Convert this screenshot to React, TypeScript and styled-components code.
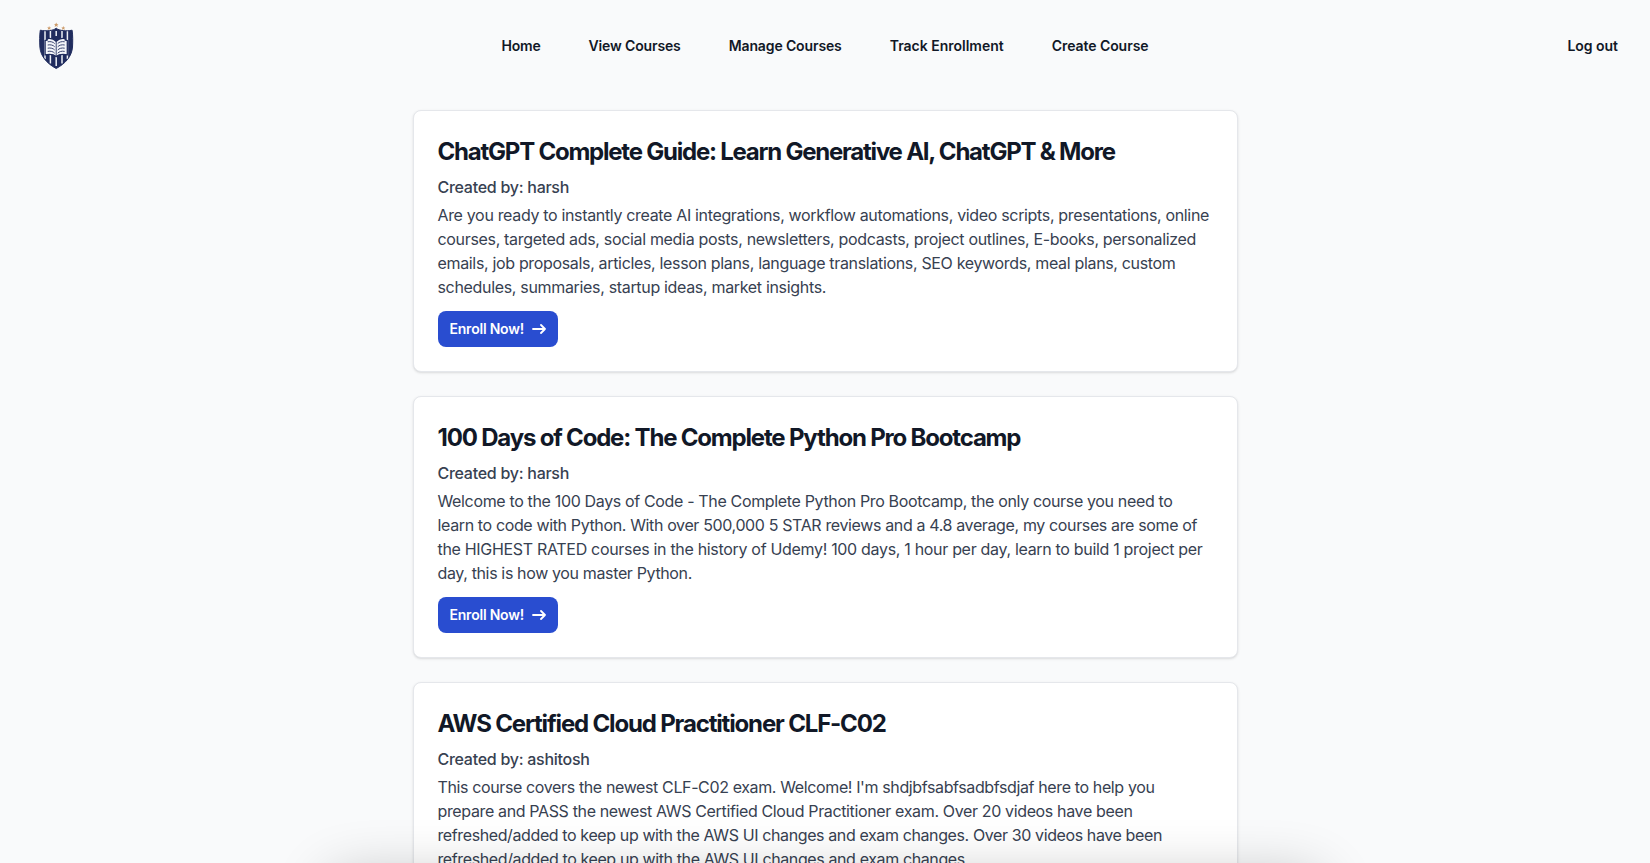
import React from 'react';
import styled, { createGlobalStyle } from 'styled-components';

const GlobalStyle = createGlobalStyle`
  *, *::before, *::after { box-sizing: border-box; }
  html, body { margin: 0; height: 100%; overflow: hidden; }
  body {
    background: #f9fafb;
    color: #111827;
    font-family: Inter, 'Liberation Sans', sans-serif;
    font-size: 16px;
    line-height: 24px;
  }
`;

const Header = styled.header`
  display: flex;
  align-items: center;
  height: 92px;
  padding: 0 32px;
`;

const Side = styled.div<{ $end?: boolean }>`
  display: flex;
  flex: 1;
  justify-content: ${(p) => (p.$end ? 'flex-end' : 'flex-start')};
`;

const Nav = styled.nav`
  display: flex;
  gap: 48px;
`;

const NavLink = styled.a<{ $tracking: number }>`
  color: #111827;
  font-size: 14px;
  font-weight: 600;
  letter-spacing: ${(p) => p.$tracking}px;
  text-decoration: none;
  white-space: nowrap;
`;

const LogoSvg = styled.svg`
  display: block;
  width: 48px;
  height: 48px;
`;

const CourseList = styled.main`
  display: flex;
  flex-direction: column;
  gap: 24px;
  width: 50%;
  margin: 18px auto 0;
`;

const Card = styled.article`
  height: 262px;
  padding: 24px;
  border: 1px solid #e5e7eb;
  border-radius: 8px;
  background: #fff;
  box-shadow: 0 1px 3px rgba(0, 0, 0, 0.1), 0 1px 2px -1px rgba(0, 0, 0, 0.1);
`;

const Title = styled.h2<{ $tracking: number }>`
  margin: 0 0 6px;
  font-size: 24px;
  font-weight: 700;
  line-height: 34px;
  letter-spacing: ${(p) => p.$tracking}px;
  white-space: nowrap;
`;

const Author = styled.p`
  margin: 0 0 4px;
  color: #374151;
  font-weight: 500;
  letter-spacing: -0.27px;
`;

const Description = styled.p`
  margin: 0 0 12px;
  color: #374151;
`;

const Line = styled.span<{ $tracking: number }>`
  display: block;
  letter-spacing: ${(p) => p.$tracking}px;
  white-space: nowrap;
`;

const EnrollButton = styled.button`
  display: inline-flex;
  align-items: center;
  justify-content: space-between;
  width: 120px;
  height: 36px;
  padding: 0 12px;
  border: 0;
  border-radius: 8px;
  background: #294dd0;
  color: #fff;
  font: 600 14px/20px Inter, 'Liberation Sans', sans-serif;
  letter-spacing: -0.22px;
  white-space: nowrap;
`;

const DockShadow = styled.div`
  position: fixed;
  top: 876px;
  left: 328px;
  right: 328px;
  height: 80px;
  border-radius: 20px;
  box-shadow: 0 0 56px rgba(0, 0, 0, 0.24);
  pointer-events: none;
`;

const SHIELD =
  'M23.5 6.2C20.5 8.8 13.5 9.4 7.6 8.2C6.8 13 6.9 20 7.2 25C7.8 34 14 41.5 23.5 46.5C33 41.5 39.2 34 39.8 25C40.1 20 40.2 13 39.4 8.2C33.5 9.4 26.5 8.8 23.5 6.2Z';
const STAR = 'M0-2.2L.65-.8L2.1-.7L1-.0L1.4 1.8L0 .9L-1.4 1.8L-1 0L-2.1-.7L-.65-.8Z';

function Logo() {
  return (
    <LogoSvg viewBox="-0.7 0 48 48" aria-label="Shield with an open book">
      <defs>
        <clipPath id="shield">
          <path d={SHIELD} />
        </clipPath>
      </defs>
      <path d={SHIELD} fill="#202c5e" />
      <g clipPath="url(#shield)" stroke="#edf0f6" strokeWidth="1.5">
        <path d="M12.3 5V37M17.7 5V41.5M23.5 9V14M23.5 35V44M29.3 5V41.5M34.7 5V37" />
      </g>
      <path
        d="M14.5 16.6C18 16 21.4 17 23.5 19.2C25.6 17 29 16 32.5 16.6V18L34.6 18.6V32.8C30 31.8 26 32.4 23.5 34.6C21 32.4 17 31.8 12.4 32.8V18.6L14.5 18Z"
        fill="#f3f5f9"
        stroke="#202c5e"
        strokeWidth="1.3"
      />
      <path
        d="M15 19.8C18 19.2 20.5 20 22 21.6M15 23C18 22.4 20.5 23.2 22 24.8M15 26.2C18 25.6 20.5 26.4 22 28M15 29.4C18 28.8 20.5 29.6 22 31.2M32 19.8C29 19.2 26.5 20 25 21.6M32 23C29 22.4 26.5 23.2 25 24.8M32 26.2C29 25.6 26.5 26.4 25 28M32 29.4C29 28.8 26.5 29.6 25 31.2M23.5 19V34"
        fill="none"
        stroke="#3b4672"
        strokeWidth="1"
      />
      <path d={SHIELD} fill="none" stroke="#202c5e" strokeWidth="1" />
      <g fill="#cd9c6b">
        <path d={STAR} transform="translate(23.5 2.9) scale(1.1)" />
        <path d={STAR} transform="translate(16.4 6.2)" />
        <path d={STAR} transform="translate(30.6 6.2)" />
      </g>
    </LogoSvg>
  );
}

function Arrow() {
  return (
    <svg width="14" height="14" viewBox="0 0 14 10" fill="none" aria-hidden="true">
      <path
        d="M1 5h12m0 0L9 1m4 4L9 9"
        stroke="currentColor"
        strokeWidth="1.8"
        strokeLinecap="round"
        strokeLinejoin="round"
      />
    </svg>
  );
}

type Tracked = [text: string, tracking: number];

const links: Tracked[] = [
  ['Home', -0.215],
  ['View Courses', -0.14],
  ['Manage Courses', -0.125],
  ['Track Enrollment', -0.007],
  ['Create Course', -0.06],
];

const courses: { title: Tracked; author: string; lines: Tracked[] }[] = [
  {
    title: ['ChatGPT Complete Guide: Learn Generative AI, ChatGPT & More', -1.225],
    author: 'harsh',
    lines: [
      ['Are you ready to instantly create AI integrations, workflow automations, video scripts, presentations, online', -0.336],
      ['courses, targeted ads, social media posts, newsletters, podcasts, project outlines, E-books, personalized', -0.326],
      ['emails, job proposals, articles, lesson plans, language translations, SEO keywords, meal plans, custom', -0.334],
      ['schedules, summaries, startup ideas, market insights.', -0.327],
    ],
  },
  {
    title: ['100 Days of Code: The Complete Python Pro Bootcamp', -1.185],
    author: 'harsh',
    lines: [
      ['Welcome to the 100 Days of Code - The Complete Python Pro Bootcamp, the only course you need to', -0.347],
      ['learn to code with Python. With over 500,000 5 STAR reviews and a 4.8 average, my courses are some of', -0.367],
      ['the HIGHEST RATED courses in the history of Udemy! 100 days, 1 hour per day, learn to build 1 project per', -0.314],
      ['day, this is how you master Python.', -0.36],
    ],
  },
  {
    title: ['AWS Certified Cloud Practitioner CLF-C02', -1.165],
    author: 'ashitosh',
    lines: [
      ["This course covers the newest CLF-C02 exam. Welcome! I'm shdjbfsabfsadbfsdjaf here to help you", -0.375],
      ['prepare and PASS the newest AWS Certified Cloud Practitioner exam. Over 20 videos have been', -0.358],
      ['refreshed/added to keep up with the AWS UI changes and exam changes. Over 30 videos have been', -0.389],
      ['refreshed/added to keep up with the AWS UI changes and exam changes.', -0.385],
    ],
  },
];

export default function App() {
  return (
    <>
      <GlobalStyle />
      <Header>
        <Side>
          <Logo />
        </Side>
        <Nav>
          {links.map(([text, tracking]) => (
            <NavLink key={text} $tracking={tracking}>
              {text}
            </NavLink>
          ))}
        </Nav>
        <Side $end>
          <NavLink $tracking={-0.03}>Log out</NavLink>
        </Side>
      </Header>
      <CourseList>
        {courses.map(({ title, author, lines }) => (
          <Card key={title[0]}>
            <Title $tracking={title[1]}>{title[0]}</Title>
            <Author>Created by: {author}</Author>
            <Description>
              {lines.map(([text, tracking]) => (
                <Line key={text} $tracking={tracking}>
                  {text}
                </Line>
              ))}
            </Description>
            <EnrollButton>
              Enroll Now!
              <Arrow />
            </EnrollButton>
          </Card>
        ))}
      </CourseList>
      <DockShadow />
    </>
  );
}
